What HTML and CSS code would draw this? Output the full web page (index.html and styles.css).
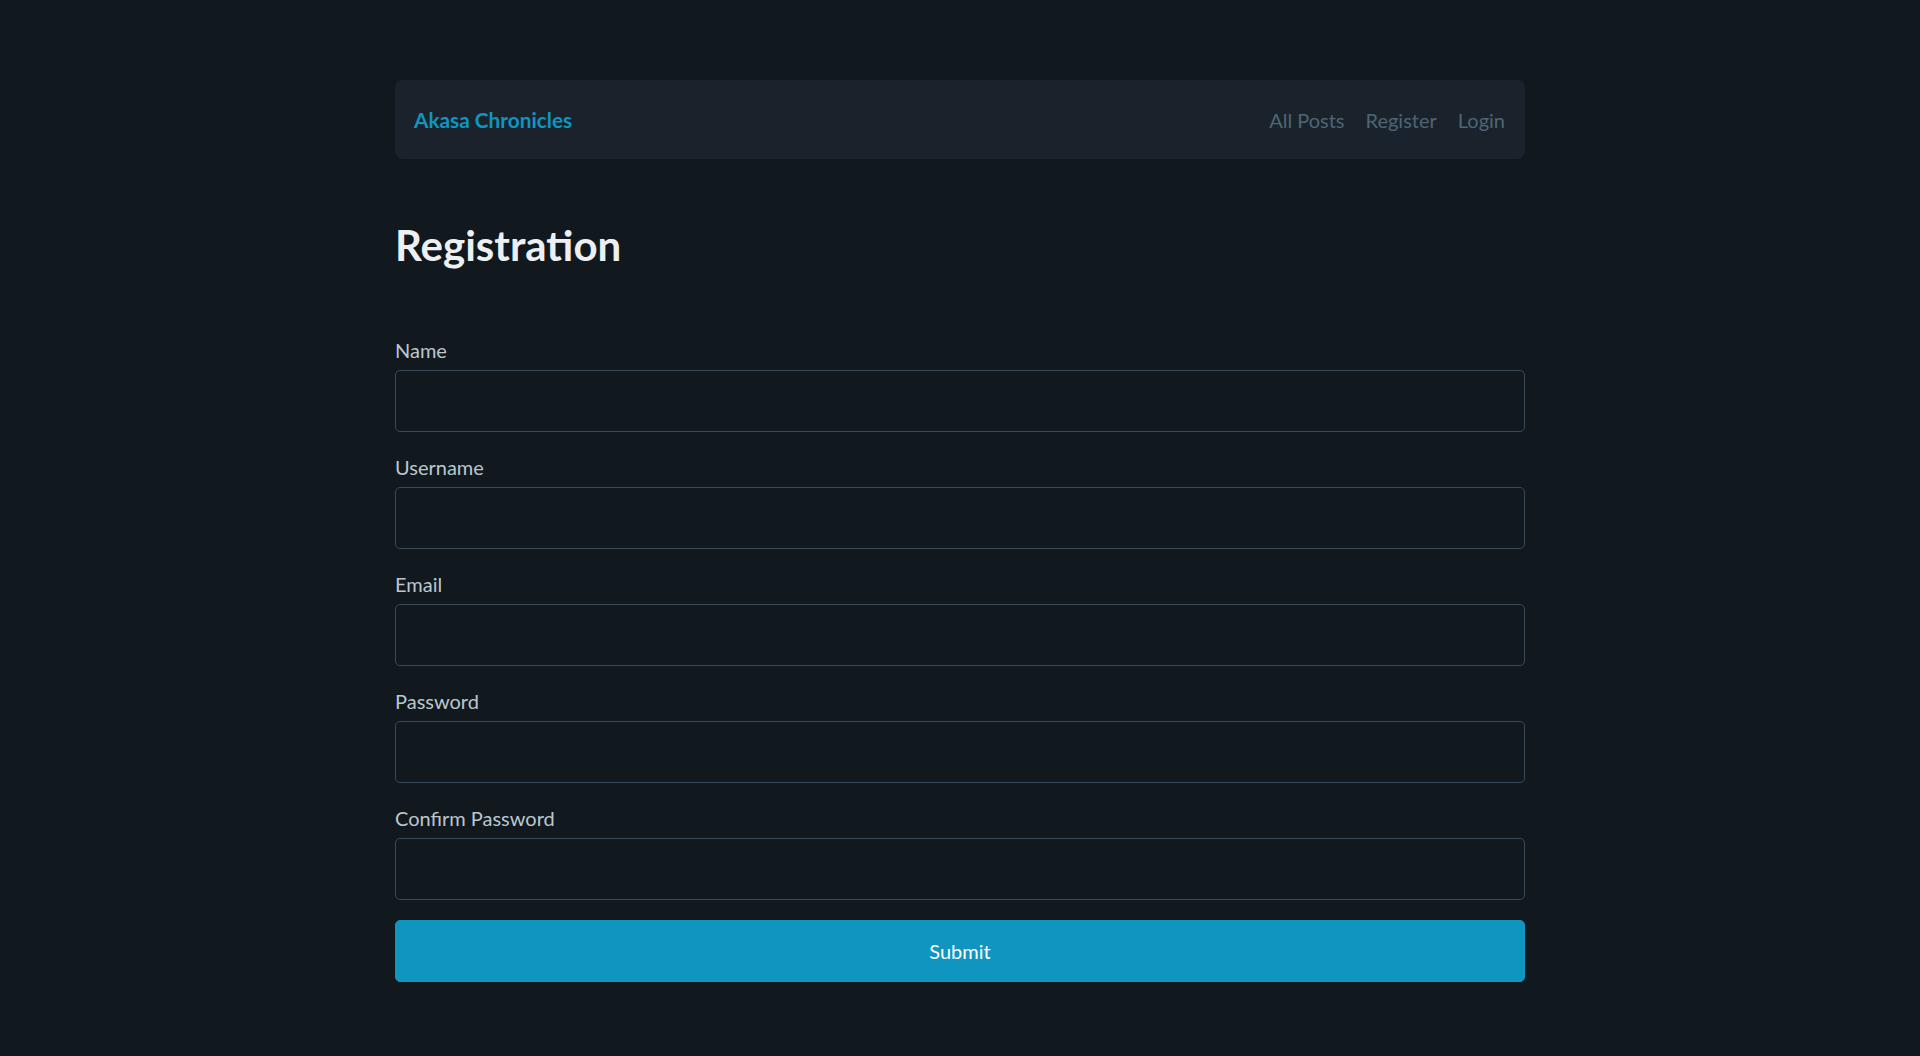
FILE: index.html
```html
<!DOCTYPE html>
<html lang="en">
<head>
<meta charset="utf-8">
<title>Registration - Akasa Chronicles</title>
<link rel="stylesheet" href="styles.css">
</head>
<body>
<main class="container">
  <nav class="navbar">
    <a class="brand" href="#">Akasa Chronicles</a>
    <ul class="nav-links">
      <li><a href="#">All Posts</a></li>
      <li><a href="#">Register</a></li>
      <li><a href="#">Login</a></li>
    </ul>
  </nav>
  <h1 class="title">Registration</h1>
  <form class="form">
    <label class="label" for="name">Name</label>
    <input class="input" id="name" type="text">
    <label class="label" for="username">Username</label>
    <input class="input" id="username" type="text">
    <label class="label" for="email">Email</label>
    <input class="input" id="email" type="email">
    <label class="label" for="password">Password</label>
    <input class="input" id="password" type="password">
    <label class="label" for="confirm">Confirm Password</label>
    <input class="input" id="confirm" type="password">
    <button class="submit" type="button">Submit</button>
  </form>
</main>
</body>
</html>
```
FILE: styles.css
```css
html, body {
  margin: 0;
  padding: 0;
  background: #11191f;
}
body {
  font-family: Lato, "Noto Sans", sans-serif;
  font-size: 20px;
  line-height: 1.5;
  color: #bbc6ce;
}
.container {
  width: 1130px;
  margin: 0 auto;
  padding-top: 80px;
  padding-bottom: 40px;
}
.navbar {
  height: 79px;
  box-sizing: border-box;
  background: #1a232b;
  border-radius: 8px;
  display: flex;
  align-items: center;
  justify-content: space-between;
  padding: 0 20px 0 19px;
}
.brand {
  color: #1095c1;
  font-weight: 700;
  font-size: 20.8px;
  text-decoration: none;
}
.nav-links {
  list-style: none;
  margin: 0;
  padding: 0;
  display: flex;
  gap: 21px;
}
.nav-links a {
  color: #4f6576;
  text-decoration: none;
  font-size: 20px;
}
.title {
  margin: 64px 0 0;
  font-size: 42px;
  line-height: 45px;
  font-weight: 700;
  color: #edf0f3;
}
.form {
  display: flex;
  flex-direction: column;
  margin-top: 67px;
}
.label {
  display: block;
  font-size: 20px;
  line-height: 30px;
  color: #bbc6ce;
  margin-bottom: 5px;
}
.input {
  display: block;
  width: 100%;
  box-sizing: border-box;
  height: 62px;
  margin: 0 0 20px;
  padding: 15px 20px;
  font: inherit;
  color: #bbc6ce;
  background: #11191f;
  border: 1px solid #374956;
  border-radius: 5px;
  outline: none;
}
.submit {
  display: block;
  width: 100%;
  height: 62px;
  margin: 0;
  padding: 15px 20px;
  font: inherit;
  color: #fff;
  background: #1095c1;
  border: 1px solid #1095c1;
  border-radius: 5px;
  cursor: pointer;
}
```
